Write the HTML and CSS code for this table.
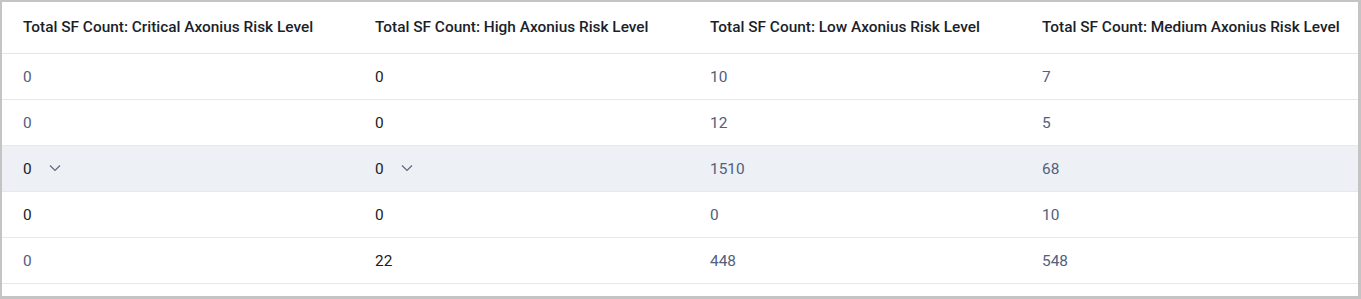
FILE: index.html
```html
<!DOCTYPE html>
<html>
<head>
<meta charset="utf-8">
<link rel="stylesheet" href="styles.css">
</head>
<body>
<div class="frame">
  <table class="grid">
    <colgroup>
      <col class="c1"><col class="c2"><col class="c3"><col class="c4">
    </colgroup>
    <thead>
      <tr>
        <th>Total SF Count: Critical Axonius Risk Level</th>
        <th>Total SF Count: High Axonius Risk Level</th>
        <th>Total SF Count: Low Axonius Risk Level</th>
        <th>Total SF Count: Medium Axonius Risk Level</th>
      </tr>
    </thead>
    <tbody>
      <tr>
        <td class="muted">0</td><td class="dark">0</td><td class="muted">10</td><td class="muted">7</td>
      </tr>
      <tr>
        <td class="muted">0</td><td class="dark">0</td><td class="muted">12</td><td class="muted">5</td>
      </tr>
      <tr class="hover">
        <td class="dark"><span class="val">0</span><svg class="chev" width="12" height="8" viewBox="0 0 12 8"><path d="M1 1.5 L6 6.5 L11 1.5" fill="none" stroke="#5f6780" stroke-width="1.2"/></svg></td>
        <td class="dark"><span class="val">0</span><svg class="chev" width="12" height="8" viewBox="0 0 12 8"><path d="M1 1.5 L6 6.5 L11 1.5" fill="none" stroke="#5f6780" stroke-width="1.2"/></svg></td>
        <td class="muted">1510</td><td class="muted">68</td>
      </tr>
      <tr>
        <td class="dark">0</td><td class="dark">0</td><td class="muted">0</td><td class="muted">10</td>
      </tr>
      <tr>
        <td class="muted">0</td><td class="dark">22</td><td class="muted">448</td><td class="muted">548</td>
      </tr>
    </tbody>
  </table>
</div>
</body>
</html>
```
FILE: styles.css
```css
html, body {
  margin: 0;
  padding: 0;
  background: #ffffff;
}
.frame {
  box-sizing: border-box;
  width: 1361px;
  height: 299px;
  border: 2px solid #c4c4c4;
  border-right-width: 3px;
  border-bottom-width: 3px;
  background: #ffffff;
  overflow: hidden;
  font-family: Roboto, "Liberation Sans", sans-serif;
  font-size: 15.4px;
}
.grid {
  width: 1356px;
  border-collapse: collapse;
  table-layout: fixed;
}
.c1 { width: 352px; }
.c2 { width: 335px; }
.c3 { width: 332px; }
.c4 { width: 337px; }
th {
  height: 50px;
  padding: 0 0 1px 21px;
  text-align: left;
  font-weight: 500;
  color: #1b1f2b;
  border-bottom: 1px solid #e3e4ee;
  white-space: nowrap;
  vertical-align: middle;
}
td {
  height: 45px;
  padding: 0 0 0 21px;
  border-bottom: 1px solid #e6e7ef;
  vertical-align: middle;
  white-space: nowrap;
}
.hover td {
  background: #edf0f5;
}
.muted { color: #53607e; }
.dark { color: #1a1d24; }
.val {
  display: inline-block;
  width: 9px;
}
.chev {
  margin-left: 17px;
  vertical-align: middle;
  position: relative;
  top: -1px;
}
```
